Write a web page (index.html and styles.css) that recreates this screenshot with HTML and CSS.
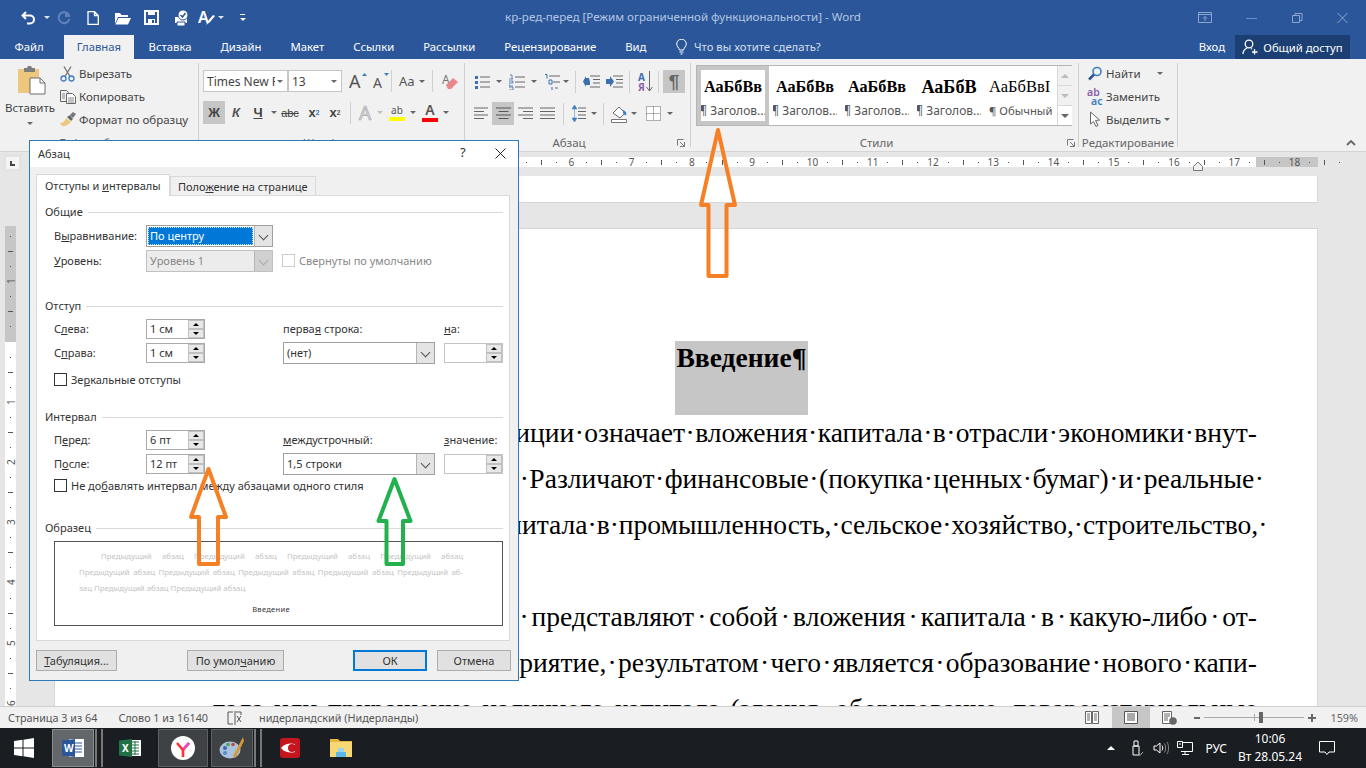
FILE: index.html
```html
<!DOCTYPE html>
<html lang="ru">
<head>
<meta charset="utf-8">
<title>кр-ред-перед - Word</title>
<link rel="stylesheet" href="styles.css">
</head>
<body>
<div class="app">
  <header class="titlebar">
    <div class="qat">
      <svg width="16" height="14" viewBox="0 0 16 14"><path d="M5 1 1.500 4.500 5 8M2 4.500h7a4 4 0 0 1 0 8H6" fill="none" stroke="#fff" stroke-width="2"/></svg>
      <i class="cw"></i>
      <svg class="qr" width="14" height="14" viewBox="0 0 14 14"><path d="M9 1v4h4M12 4A5.500 5.500 0 1 0 12.500 8" fill="none" stroke="#5f82b8" stroke-width="2"/></svg>
      <svg class="qn" width="12" height="14" viewBox="0 0 12 14"><path d="M1 .7h6.500l3.800 3.800v8.800H1zM7.500.7v3.800h3.800" fill="none" stroke="#fff" stroke-width="1.300"/></svg>
      <svg class="qo" width="17" height="14" viewBox="0 0 17 14"><path d="M1 2h5l1.500 2H14v2H4L1 13z" fill="#fff"/><path d="M4.500 7H17l-3 6.500H1.500z" fill="#fff"/></svg>
      <svg class="qs" width="15" height="15" viewBox="0 0 15 15"><path d="M1 1h13v13H1z" fill="none" stroke="#fff" stroke-width="2"/><path d="M4 1h7v4H4zM4 9h7v5H4z" fill="#fff"/><path d="M8 10h2v3H8z" fill="#2b579a"/></svg>
      <svg class="qp" width="18" height="18" viewBox="0 0 18 18"><path d="M3 8h12v6H3z" fill="#fff"/><path d="M5 13h8v4H5z" fill="#fff" stroke="#2b579a"/><circle cx="11" cy="6" r="5" fill="#fff" stroke="#2b579a"/><path d="m8.500 6 2 2 3-4" fill="none" stroke="#2b579a" stroke-width="1.500"/></svg>
      <svg class="qa" width="18" height="18" viewBox="0 0 18 18"><text x="0" y="14" class="qa-t">A</text><path d="m8 16 2-4 5-6 2 1-5 6z" fill="#fff"/></svg>
      <i class="cw qc"></i>
      <span class="qz"><i></i></span>
    </div>
    <div class="doc-title">кр-ред-перед [Режим ограниченной функциональности] - Word</div>
    <div class="winctl">
      <svg width="14" height="12" viewBox="0 0 14 12"><path d="M.5 .5h13v10H.5zM.5 2.500h13M7 9V4.500M5 6.500l2-2 2 2" fill="none" stroke="#8ba6cf"/></svg>
      <svg width="11" height="12" viewBox="0 0 11 12"><path d="M0 6.500h11" stroke="#6d8fc3"/></svg>
      <svg width="11" height="12" viewBox="0 0 11 12"><path d="M.5 3.500h7v7h-7zM3 3V1.500h7v7H8" fill="none" stroke="#8ba6cf"/></svg>
      <svg width="11" height="12" viewBox="0 0 11 12"><path d="m.5 1 10 10m0-10-10 10" stroke="#8ba6cf"/></svg>
    </div>
  </header>

  <nav class="tabs">
    <span class="tab t-file">Файл</span>
    <span class="tab active">Главная</span>
    <span class="tab">Вставка</span>
    <span class="tab">Дизайн</span>
    <span class="tab">Макет</span>
    <span class="tab">Ссылки</span>
    <span class="tab">Рассылки</span>
    <span class="tab">Рецензирование</span>
    <span class="tab">Вид</span>
    <svg class="bulb" width="11" height="16" viewBox="0 0 11 16"><path d="M3.500 11C3 8.500 .7 7.500 .7 5a4.800 4.800 0 0 1 9.600 0c0 2.500-2.300 3.500-2.800 6zM3.500 13h4M4.500 15h2" fill="none" stroke="#fff"/></svg>
    <span class="search">Что вы хотите сделать?</span>
    <span class="login">Вход</span>
    <span class="share">
      <svg width="16" height="16" viewBox="0 0 16 16"><circle cx="7" cy="5" r="3.800" fill="none" stroke="#fff" stroke-width="1.300"/><path d="M1 15c0-3 2-5 4-6M9 9.500l1 .5M12.500 10v5.500M10 13h5.500" fill="none" stroke="#fff" stroke-width="1.300"/></svg>
      Общий доступ
    </span>
  </nav>

  <section class="ribbon">
    <div class="grp g-clip">
      <div class="grp-body clip">
        <div class="paste">
          <svg width="30" height="30" viewBox="0 0 30 30"><path d="M1 4h21v24H1z" fill="#eec77f"/><path d="M7 3h3l1-2h3l1 2h3v4H7z" fill="#7d7d7d"/><path d="M13 13h10l5 5v11H13z" fill="#fff" stroke="#6d6d6d"/><path d="M23 13v5h5" fill="none" stroke="#6d6d6d"/></svg>
          <span class="paste-l">Вставить</span>
          <i class="caret"></i>
        </div>
        <div class="clip-list">
          <div class="cl"><svg width="16" height="16" viewBox="0 0 16 16"><path d="m4 .5 6 10M11 .5l-6 10" stroke="#777" stroke-width="1.400"/><circle cx="3.500" cy="12.500" r="2.500" fill="none" stroke="#3c7fc0" stroke-width="1.300"/><circle cx="11.500" cy="12.500" r="2.500" fill="none" stroke="#3c7fc0" stroke-width="1.300"/></svg>Вырезать</div>
          <div class="cl"><svg width="16" height="14" viewBox="0 0 16 14"><path d="M.5 .5h6l2 2v9h-8z" fill="#f1f1f1" stroke="#666"/><path d="M6.500 3.500h6l3 3v7h-9z" fill="#fff" stroke="#666"/><path d="M2 4h3M2 6h3M2 8h3M8 8h6M8 10h6M8 12h6" stroke="#888"/></svg>Копировать</div>
          <div class="cl"><svg width="16" height="15" viewBox="0 0 16 15"><path d="M0 11c3 0 5-2 6-5l5 4c-2 2-6 5-9 4z" fill="#eec77f"/><path d="m7 5 3-2 3 4-2 2z" fill="#666"/><path d="m10 3 3-3 3 2-3 4z" fill="#777"/></svg>Формат по образцу</div>
        </div>
      </div>
      <div class="grp-label">Буфер обмена</div>
    </div>

    <div class="grp g-font">
      <div class="grp-body">
        <div class="row">
          <span class="fld f-name"><span>Times New R</span><i class="caret fc"></i></span>
          <span class="fld f-size">13<i class="caret fc"></i></span>
          <svg class="m7" width="20" height="18" viewBox="0 0 20 18"><text x="0" y="16" class="ic-a">A</text><path d="m13 4 2.500-3L18 4z" fill="#3c7fc0"/></svg>
          <svg class="m3" width="18" height="18" viewBox="0 0 18 18"><text x="1" y="16" class="ic-a2">A</text><path d="m12 1 2.500 3L17 1z" fill="#3c7fc0"/></svg>
          <i class="sep"></i>
          <span class="aa">Aa</span><i class="caret ca"></i>
          <i class="sep s2"></i>
          <svg class="m9" width="17" height="19" viewBox="0 0 17 19"><text x="0" y="12" class="ic-e">A</text><path d="m4 13 7-7 5 4-7 7H6z" fill="#e9888a"/></svg>
        </div>
        <div class="row r2">
          <span class="btn on bold">Ж</span>
          <span class="btn it">К</span>
          <span class="btn bold und">Ч</span>
          <i class="caret cb"></i>
          <span class="btn strike">abc</span>
          <span class="btn xx">x<sub>2</sub></span>
          <span class="btn xx xs">x<sup>2</sup></span>
          <i class="sep s3"></i>
          <span class="ghost">A</span><i class="caret cg"></i>
          <span class="hl"><span>ab</span><i class="yl"></i></span><i class="caret ch"></i>
          <span class="fc-a"><span>A</span><i class="rd"></i></span><i class="caret cr"></i>
        </div>
      </div>
      <div class="grp-label">Шрифт</div>
    </div>

    <div class="grp g-para">
      <div class="grp-body">
        <div class="row rp">
          <svg class="pl" width="16" height="16" viewBox="0 0 16 16"><path d="M6 3h10M6 8h10M6 13h10" stroke="#666"/><path d="M1 2h3v3H1zM1 7h3v3H1zM1 12h3v3H1z" fill="#3c6fb0"/></svg><i class="caret pc"></i>
          <svg class="pn" width="16" height="16" viewBox="0 0 16 16"><path d="M6 3h10M6 8h10M6 13h10" stroke="#666"/><path d="M1 1h2v4M0 5h4M0 7h4v2H0v3h4M0 13h4v3H0" fill="none" stroke="#3c6fb0" stroke-width=".8"/></svg><i class="caret pc"></i>
          <svg class="pm" width="16" height="16" viewBox="0 0 16 16"><path d="M5 2h11M9 8h7M11 14h3" stroke="#666"/><path d="M1 .5h2v4M5 6h3v4H5zM8 13v3" fill="none" stroke="#3c6fb0"/></svg><i class="caret pd"></i>
          <i class="sep s4"></i>
          <svg class="po" width="17" height="15" viewBox="0 0 17 15"><path d="M7 2h10M10 5.500h7M10 9h7M7 13h10" stroke="#666"/><path d="M6 4H3V2L0 7.500 3 13v-2h4V8z" fill="#3c6fb0"/></svg>
          <svg class="pi" width="17" height="15" viewBox="0 0 17 15"><path d="M7 2h10M10 5.500h7M10 9h7M7 13h10" stroke="#666"/><path d="M0 5h4V2l4 5.500L4 13v-3H0z" fill="#3c6fb0"/></svg>
          <i class="sep s5"></i>
          <span class="sort"><span class="sa">А</span><span class="sb">Я</span></span>
          <svg class="sd" width="7" height="21" viewBox="0 0 7 21"><path d="M3.500 0v20M.5 16l3 4 3-4" fill="none" stroke="#666"/></svg>
          <i class="sep s6"></i>
          <span class="btn on pil">¶</span>
        </div>
        <div class="row r2">
          <svg class="al1" width="15" height="13" viewBox="0 0 15 13"><path d="M0 1h14M0 4.500h10M0 8h14M0 11.500h10" stroke="#666"/></svg>
          <span class="btn on al2"><svg width="15" height="13" viewBox="0 0 15 13"><path d="M0 1h15M2.500 4.500h10M0 8h15M2.500 11.500h10" stroke="#555"/></svg></span>
          <svg class="al3" width="15" height="13" viewBox="0 0 15 13"><path d="M0 1h15M5 4.500h10M0 8h15M5 11.500h10" stroke="#666"/></svg>
          <svg class="al4" width="15" height="13" viewBox="0 0 15 13"><path d="M0 1h15M0 4.500h15M0 8h15M0 11.500h15" stroke="#666"/></svg>
          <i class="sep s7"></i>
          <svg class="ls" width="14" height="17" viewBox="0 0 14 17"><path d="M6 3h8M6 6.500h8M6 10h8M6 13.500h8" stroke="#666"/><path d="M2.500 2v13M0 4l2.500-4L5 4zM0 13l2.500 4L5 13z" fill="#3c7fc0" stroke="#3c7fc0" stroke-width=".5"/></svg><i class="caret pe"></i>
          <i class="sep s8"></i>
          <svg class="fl" width="17" height="18" viewBox="0 0 17 18"><path d="m2 8 6-6 6 6-5 5z" fill="#fff" stroke="#666"/><path d="M12 5c3 1 4 4 3 5s-2-1-3-2z" fill="#3c7fc0"/><path d="M.5 14.500h15v3H.5z" fill="#fff" stroke="#777"/></svg><i class="caret pf"></i>
          <svg class="bd" width="15" height="15" viewBox="0 0 15 15"><path d="M.5 .5h14v14H.5zM7.500 .5v14M.5 7.500h14" fill="#fff" stroke="#666" stroke-dasharray="1 1"/></svg><i class="caret pg"></i>
        </div>
      </div>
      <div class="grp-label">Абзац<svg class="launch" width="8" height="8" viewBox="0 0 8 8"><path d="M.5 .5h6M.5 .5v6M7.500 3v4.500H3M3 3l4 4" fill="none" stroke="#777"/></svg></div>
    </div>

    <div class="grp g-styles">
      <div class="grp-body">
        <div class="gallery">
          <div class="style sel"><b>АаБбВв</b><small>¶ Заголов...</small></div>
          <div class="style"><b>АаБбВв</b><small>¶ Заголов...</small></div>
          <div class="style"><b>АаБбВв</b><small>¶ Заголов...</small></div>
          <div class="style"><b class="big">АаБбВ</b><small>¶ Заголов...</small></div>
          <div class="style plain"><b>АаБбВвI</b><small>¶ Обычный</small></div>
          <div class="scroll">
            <span><i class="up"></i></span>
            <span><i class="dn"></i></span>
            <span class="more"><i class="dn2"></i></span>
          </div>
        </div>
      </div>
      <div class="grp-label">Стили<svg class="launch l2" width="8" height="8" viewBox="0 0 8 8"><path d="M.5 .5h6M.5 .5v6M7.500 3v4.500H3M3 3l4 4" fill="none" stroke="#777"/></svg></div>
    </div>

    <div class="grp g-edit">
      <div class="grp-body edit">
        <div class="ed"><svg width="15" height="15" viewBox="0 0 15 15"><circle cx="9.500" cy="5.500" r="4" fill="none" stroke="#3c7fc0" stroke-width="1.600"/><path d="m6.500 8.500-5 5" stroke="#2b579a" stroke-width="2.500"/></svg>Найти<i class="caret ce"></i></div>
        <div class="ed"><span class="abac"><span>ab</span><span>ac</span></span>Заменить</div>
        <div class="ed"><svg width="15" height="17" viewBox="0 0 15 17"><path d="M3 1v12l3-2.500 2.500 5 2-1-2.500-5 4-.5z" fill="#fff" stroke="#666"/></svg>Выделить<i class="caret cf"></i></div>
      </div>
      <div class="grp-label">Редактирование</div>
    </div>
    <svg class="collapse" width="10" height="6" viewBox="0 0 10 6"><path d="m1 5 4-4 4 4" fill="none" stroke="#666" stroke-width="1.800"/></svg>
  </section>

  <main class="work">
    <div class="hrow">
      <span class="corner"><i></i></span>
      <div class="hruler">
        <b class="cm"><span>1</span><i class="d"></i><i class="t"></i><i class="d"></i></b>
        <b class="cm"><span>2</span><i class="d"></i><i class="t"></i><i class="d"></i></b>
        <b class="cm"><span>3</span><i class="d"></i><i class="t"></i><i class="d"></i></b>
        <b class="cm"><span>4</span><i class="d"></i><i class="t"></i><i class="d"></i></b>
        <b class="cm"><span>5</span><i class="d"></i><i class="t"></i><i class="d"></i></b>
        <b class="cm"><span>6</span><i class="d"></i><i class="t"></i><i class="d"></i></b>
        <b class="cm"><span>7</span><i class="d"></i><i class="t"></i><i class="d"></i></b>
        <b class="cm"><span>8</span><i class="d"></i><i class="t"></i><i class="d"></i></b>
        <b class="cm"><span>9</span><i class="d"></i><i class="t"></i><i class="d"></i></b>
        <b class="cm"><span>10</span><i class="d"></i><i class="t"></i><i class="d"></i></b>
        <b class="cm"><span>11</span><i class="d"></i><i class="t"></i><i class="d"></i></b>
        <b class="cm"><span>12</span><i class="d"></i><i class="t"></i><i class="d"></i></b>
        <b class="cm"><span>13</span><i class="d"></i><i class="t"></i><i class="d"></i></b>
        <b class="cm"><span>14</span><i class="d"></i><i class="t"></i><i class="d"></i></b>
        <b class="cm"><span>15</span><i class="d"></i><i class="t"></i><i class="d"></i></b>
        <b class="cm"><span>16</span><i class="d"></i><i class="t"></i><i class="d"></i></b>
        <b class="cm"><span>17</span><i class="d"></i><i class="t"></i><i class="d"></i></b>
        <b class="cm"><span>18</span><i class="d"></i><i class="t"></i><i class="d"></i></b>
        <svg class="indent" width="10" height="10" viewBox="0 0 10 10"><path d="M.5 9.500v-4L5 1l4.500 4.500v4z" fill="#f1f1f1" stroke="#777"/></svg>
      </div>
    </div>
    <div class="docrow">
      <div class="vside">
        <div class="vruler">
          <b class="vm"><i class="d"></i><i class="t"></i><i class="d"></i><span>1</span></b>
          <b class="vm"><i class="d"></i><i class="t"></i><i class="d"></i><span></span></b>
          <b class="vm"><i class="d"></i><i class="t"></i><i class="d"></i><span>1</span></b>
          <b class="vm"><i class="d"></i><i class="t"></i><i class="d"></i><span>2</span></b>
          <b class="vm"><i class="d"></i><i class="t"></i><i class="d"></i><span>3</span></b>
          <b class="vm"><i class="d"></i><i class="t"></i><i class="d"></i><span>4</span></b>
          <b class="vm"><i class="d"></i><i class="t"></i><i class="d"></i><span>5</span></b>
          <b class="vm"><i class="d"></i><i class="t"></i><i class="d"></i><span>6</span></b>
        </div>
      </div>
      <div class="pages">
        <div class="page-prev"></div>
        <article class="page">
          <h1 class="heading"><span>Введение¶</span></h1>
          <p class="ln first">Понятие · слова · инвестиции · означает · вложения · капитала · в · отрасли · экономики · внут-</p>
          <p class="ln hang">ри · страны · и · за · границей. · Различают · финансовые · (покупка · ценных · бумаг) · и · реальные ·</p>
          <p class="ln hang">инвестиции · вложения · капитала · в · промышленность, · сельское · хозяйство, · строительство, ·</p>
          <p class="ln short">транспорт · и · торговлю.¶</p>
          <p class="ln first">Реальные · инвестиции · представляют · собой · вложения · капитала · в · какую-либо · от-</p>
          <p class="ln">расль · страны · и · на · предприятие, · результатом · чего · является · образование · нового · капи-</p>
          <p class="ln">тала · или · приращение · наличного · капитала · (здания, · оборудование, · товароматериальные</p>
        </article>
      </div>
    </div>
  </main>

  <footer class="status">
    <span class="st-a">Страница 3 из 64</span>
    <span class="st-b">Слово 1 из 16140</span>
    <svg class="st-i" width="15" height="14" viewBox="0 0 15 14"><path d="M6 1H1v12h5M9 1h5v3M8 0v14M10 5l4 6m0-6-4 6" fill="none" stroke="#555"/></svg>
    <span class="st-c">нидерландский (Нидерланды)</span>
    <span class="st-r">
      <svg class="v1" width="14" height="13" viewBox="0 0 14 13"><path d="M.5 .5h6v12h-6zM7.500 .5h6v12h-6zM2 3h3M2 5h3M2 7h3M2 9h3M9 3h3M9 5h3M9 7h3M9 9h3" fill="#fff" stroke="#666"/></svg>
      <span class="v2"><svg width="14" height="13" viewBox="0 0 14 13"><path d="M.5 .5h13v12H.5zM3 3h8M3 5h8M3 7h8M3 9h8" fill="#fff" stroke="#555"/></svg></span>
      <svg class="v3" width="15" height="14" viewBox="0 0 15 14"><path d="M.5 .5h9v12h-9zM2 3h6M2 5h6M2 7h4M2 9h4" fill="#fff" stroke="#666"/><circle cx="11" cy="10" r="3.800" fill="#666"/></svg>
      <i class="zm-minus"></i>
      <span class="slider"><i class="zt"></i><i class="zh"></i></span>
      <span class="zm-plus"></span>
      <span class="zm-val">159%</span>
    </span>
  </footer>

  <div class="taskbar">
    <svg class="win" width="20" height="20" viewBox="0 0 20 20"><path d="M0 3 8.500 1.800v7.700H0zM9.500 1.700 20 0v9.500H9.500zM0 10.500h8.500v7.700L0 17zM9.500 10.500H20V20L9.500 18.300z" fill="#fff"/></svg>
    <span class="tb tb-word">
      <svg width="22" height="20" viewBox="0 0 22 20"><path d="M7 1h15v18H7z" fill="#fff"/><path d="M10 5h10M10 8h10M10 11h10M10 14h10" stroke="#2b579a"/><path d="M0 2.500 13 1v18L0 17.500z" fill="#2b579a"/><text x="2" y="14" class="tw">W</text></svg>
    </span>
    <i class="tb-edge"></i>
    <span class="tb tb-x">
      <svg width="22" height="20" viewBox="0 0 22 20"><path d="M8 2h14v16H8z" fill="#fff"/><path d="M13 4h7M13 7h7M13 10h7M13 13h7M13 16h7M16 3v14" stroke="#217346"/><path d="M0 2.500 13 1v18L0 17.500z" fill="#217346"/><text x="3" y="14" class="tw">X</text></svg>
    </span>
    <span class="tb tb-y">
      <svg width="24" height="24" viewBox="0 0 24 24"><circle cx="12" cy="12" r="12" fill="#fff"/><path d="m6 7 6 7 6-7" fill="none" stroke="#f33" stroke-width="2.600"/><path d="M12 14v7" stroke="#f33" stroke-width="2.600"/><path d="m12.500 13 5.500-6" stroke="#e94cc0" stroke-width="2.600"/></svg>
    </span>
    <span class="tb tb-p">
      <svg width="26" height="24" viewBox="0 0 26 24"><ellipse cx="11" cy="14" rx="10.500" ry="8.500" fill="#a9c3dc"/><circle cx="6" cy="12" r="2" fill="#46a"/><circle cx="9" cy="8.500" r="1.800" fill="#4a5"/><circle cx="14" cy="8.500" r="1.800" fill="#c44"/><circle cx="6" cy="17" r="2" fill="#58c"/><path d="M24 1 14 20l2.500 2L25 5z" fill="#d8963a"/></svg>
      </span>
    <i class="tb-edge e2"></i>
    <svg class="tb-a" width="20" height="20" viewBox="0 0 20 20"><rect width="20" height="20" rx="3" fill="#c4161c"/><path d="M1 10c4-5 10-5 14-4v8c-4 1-10 1-14-4z" fill="#fff"/><circle cx="12" cy="10" r="4" fill="#c4161c"/></svg>
    <svg class="tb-f" width="22" height="20" viewBox="0 0 22 20"><path d="M0 1h8l2 2h12v5H0z" fill="#e6b93e"/><path d="M0 4h22v15H0z" fill="#f8d775"/><path d="M6 14h10v5H6z" fill="#5db7e8"/><path d="M8 10h6v4H8z" fill="#9dd4f2"/></svg>
    <div class="tray">
      <i class="tr-up"></i>
      <svg class="tr1" width="12" height="16" viewBox="0 0 12 16"><path d="M2 6h6v9H2zM3 1h4v5H3z" fill="none" stroke="#fff"/><path d="m7 14 2 1.500L12 12" fill="none" stroke="#aaa"/></svg>
      <svg class="tr2" width="16" height="14" viewBox="0 0 16 14"><path d="M1 5h2.500L7 2v10L3.500 9H1z" fill="none" stroke="#fff"/><path d="M9 4.500c1 1.500 1 3.500 0 5" fill="none" stroke="#fff"/><path d="M11.500 2.500c1.500 2.500 1.500 6.500 0 9M14 1c2 3 2 9 0 12" fill="none" stroke="#888"/></svg>
      <svg class="tr3" width="16" height="14" viewBox="0 0 16 14"><path d="M4 1.500h11.500v9H4M8 10.500v3M5 13.500h7" fill="none" stroke="#fff"/><path d="M.5 .5h5v6h-5z" fill="#1b1e22" stroke="#fff"/><path d="M2 3h2" stroke="#fff"/></svg>
      <span class="tr-lang">РУС</span>
      <span class="clock"><span>10:06</span><span>Вт 28.05.24</span></span>
      <svg class="tr-n" width="16" height="14" viewBox="0 0 16 14"><path d="M.5 .5h15v10.500H10L8 13.500 6 11H.5z" fill="none" stroke="#fff"/></svg>
    </div>
  </div>

  <aside class="dialog">
    <div class="dlg-title"><span>Абзац</span><span class="dlg-q">?</span>
      <svg class="dlg-x" width="11" height="11" viewBox="0 0 11 11"><path d="m.5 .5 10 10m0-10-10 10" stroke="#222"/></svg>
    </div>
    <div class="dlg-body">
      <div class="dtabs">
        <span class="dtab on">Отступы и <u>и</u>нтервалы</span>
        <span class="dtab">Поло<u>ж</u>ение на странице</span>
      </div>
      <div class="panel">
        <div class="legend l-a"><span>Общие</span></div>
        <div class="gen">
          <label class="lb">В<u>ы</u>равнивание:</label>
          <span class="combo focus"><span class="val"><em>По центру</em></span><i class="cbt"></i></span>
          <span></span>
          <label class="lb"><u>У</u>ровень:</label>
          <span class="combo off"><span class="val">Уровень 1</span><i class="cbt"></i></span>
          <span class="chk disabled"><i></i><span>Свернуты по умолчанию</span></span>
        </div>
        <div class="legend l-b"><span>Отступ</span></div>
        <div class="fields">
          <label class="lb">С<u>л</u>ева:</label>
          <span class="spin"><span>1 см</span><b class="ar"><i></i><i></i></b></span>
          <span class="ff"></span>
          <label class="lb">перва<u>я</u> строка:</label>
          <span></span>
          <label class="lb"><u>н</u>а:</label>
          <label class="lb">С<u>п</u>рава:</label>
          <span class="spin"><span>1 см</span><b class="ar"><i></i><i></i></b></span>
          <span class="ff"></span>
          <span class="combo"><span class="val">(нет)</span><i class="cbt"></i></span>
          <span></span>
          <span class="spin light"><span></span><b class="ar"><i></i><i></i></b></span>
        </div>
        <span class="chk c-a"><i></i><span>Зе<u>р</u>кальные отступы</span></span>
        <div class="legend l-c"><span>Интервал</span></div>
        <div class="fields">
          <label class="lb">П<u>е</u>ред:</label>
          <span class="spin"><span>6 пт</span><b class="ar"><i></i><i></i></b></span>
          <span class="ff"></span>
          <label class="lb"><u>м</u>еждустрочный:</label>
          <span></span>
          <label class="lb"><u>з</u>начение:</label>
          <label class="lb">П<u>о</u>сле:</label>
          <span class="spin"><span>12 пт</span><b class="ar"><i></i><i></i></b></span>
          <span class="ff"></span>
          <span class="combo"><span class="val">1,5 строки</span><i class="cbt"></i></span>
          <span></span>
          <span class="spin light"><span></span><b class="ar"><i></i><i></i></b></span>
        </div>
        <span class="chk c-b"><i></i><span>Не до<u>б</u>авлять интервал между абзацами одного стиля</span></span>
        <div class="legend l-d"><span>Образец</span></div>
        <div class="sample">
          <p class="sp first">Предыдущий абзац Предыдущий абзац Предыдущий абзац Предыдущий абзац</p>
          <p class="sp">Предыдущий абзац Предыдущий абзац Предыдущий абзац Предыдущий абзац Предыдущий аб-</p>
          <p class="sp left">зац Предыдущий абзац Предыдущий абзац</p>
          <p class="sp-cur">Введение</p>
        </div>
      </div>
      <div class="dbtns">
        <span class="dbtn b1"><u>Т</u>абуляция...</span>
        <span class="dbtn b2">По умол<u>ч</u>анию</span>
        <span class="dbtn b3">ОК</span>
        <span class="dbtn b4">Отмена</span>
      </div>
    </div>
  </aside>

  <svg class="arrows" width="1366" height="768" viewBox="0 0 1366 768">
    <path d="M718 130 735 205H726.500V276H708.500V205H701z" fill="none" stroke="#f58025" stroke-width="4" stroke-linejoin="round"/>
    <path d="M208.500 469 226 517H218V564H199V517H191z" fill="none" stroke="#f58025" stroke-width="4" stroke-linejoin="round"/>
    <path d="M394.500 479 410.500 521H403V564H386.500V521H378.500z" fill="none" stroke="#22b14c" stroke-width="4" stroke-linejoin="round"/>
  </svg>
</div>
</body>
</html>
```
FILE: styles.css
```css
* { box-sizing: border-box; }
html, body { margin: 0; height: 100%; }
body { font-family: "Noto Sans", "Open Sans", sans-serif; font-size: 11.5px; color: #444; overflow: hidden; }
i, b, em { font-style: normal; font-weight: normal; }
.app { position: relative; width: 1366px; height: 768px; display: flex; flex-direction: column; overflow: hidden; background: #e6e6e6; }

/* title bar */
.titlebar { height: 35px; background: #2b579a; display: flex; align-items: center; position: relative; flex: none; }
.qat { display: flex; align-items: center; padding-left: 21px; width: 480px; height: 100%; }
.cw { width: 0; height: 0; border: 3px solid transparent; border-top: 3px solid #dfe7f3; border-bottom: 0; margin-left: 7px; }
.qr { margin-left: 7px; }
.qn { margin-left: 16px; }
.qo { margin-left: 15px; }
.qs { margin-left: 13px; }
.qp { margin-left: 13px; }
.qa { margin-left: 8px; }
.qa-t { font: 600 16px "Noto Sans", sans-serif; fill: #fff; }
.qc { margin-left: 2px; }
.qz { margin-left: 16px; width: 5px; height: 7px; border-top: 1px solid #fff; display: flex; align-items: flex-end; }
.qz i { border: 3px solid transparent; border-top: 3px solid #fff; border-bottom: 0; margin-left: -.5px; }
.doc-title { position: absolute; left: 505px; top: 9px; font-size: 11.550px; color: #b4c6e2; white-space: nowrap; }
.winctl { margin-left: auto; display: flex; align-items: center; padding-right: 18px; gap: 34.500px; }

/* tabs */
.tabs { height: 24px; background: #2b579a; display: flex; flex: none; align-items: stretch; color: #fff; font-size: 11.300px; line-height: 23px; }
.tab { padding: 0 14.500px; white-space: nowrap; }
.t-file { padding-right: 20px; }
.tab.active { background: #f1f1f1; color: #2b579a; padding: 0 13px; }
.bulb { margin: 4px 0 0 15px; }
.search { margin-left: 7px; color: #d5dfee; }
.login { margin-left: auto; }
.share { margin: 0 16px 0 10px; width: 115px; background: #1c3f73; display: flex; align-items: center; justify-content: center; gap: 5px; }

/* ribbon */
.ribbon { height: 93px; background: #f1f1f1; border-bottom: 1px solid #d4d4d4; display: flex; flex: none; position: relative; }
.grp { display: flex; flex-direction: column; border-right: 1px solid #d0d0d0; margin: 4px 0 0; height: 84px; }
.grp-body { flex: 1; min-height: 0; }
.grp-label { height: 17px; text-align: center; color: #666; line-height: 25px; position: relative; white-space: nowrap; }
.launch { position: absolute; right: 5px; top: 9px; }
.launch.l2 { right: 3px; }
.g-clip { width: 199px; }
.g-font { width: 266px; padding-left: 4px; }
.g-font .grp-label { padding-right: 22px; }
.g-para { width: 226px; padding: 0 0 0 9px; }
.g-para .grp-label { padding-right: 26px; }
.g-styles { width: 388px; padding-left: 5px; }
.g-styles .grp-label { padding-right: 21px; }
.g-edit { width: 99px; }
.collapse { position: absolute; right: 10px; top: 81px; }
.caret { display: block; flex: none; width: 0; height: 0; border: 3px solid transparent; border-top: 3px solid #666; border-bottom: 0; }

.clip { display: flex; }
.paste { width: 60px; display: flex; flex-direction: column; align-items: center; padding-top: 2px; }
.paste svg { margin-left: 4px; flex: none; }
.paste-l { margin-top: 5px; line-height: 16px; }
.paste .caret { margin-top: 6px; }
.clip-list { display: flex; flex-direction: column; margin-top: -1px; }
.cl { height: 23px; flex: none; display: flex; align-items: center; gap: 3px; white-space: nowrap; }

.row { display: flex; align-items: center; height: 22px; margin-top: 7px; }
.r2 { height: 23px; margin-top: 9px; }
.fld { height: 22px; background: #fff; border: 1px solid #c6c6c6; display: flex; align-items: center; padding-left: 3px; position: relative; font-size: 12px; color: #444; white-space: nowrap; }
.f-name { width: 85px; }
.f-name span { display: block; width: 68px; overflow: hidden; }
.f-size { width: 54px; }
.fc { position: absolute; right: 4px; top: 9px; }
.m7 { margin-left: 7px; }
.m3 { margin-left: 3px; }
.m9 { margin-left: 9px; }
.ic-a { font: 18px "Noto Sans", sans-serif; fill: #555; }
.ic-a2 { font: 14px "Noto Sans", sans-serif; fill: #555; }
.ic-e { font: 12px "Noto Sans", sans-serif; fill: #777; }
.tw { font: 700 10px "Noto Sans", sans-serif; fill: #fff; }
.sep { display: block; flex: none; width: 1px; height: 22px; background: #d0d0d0; margin-left: 1px; }
.aa { margin-left: 7px; font-size: 13px; color: #555; }
.ca { margin-left: 4px; }
.s2 { margin-left: 7px; }
.btn { flex: none; width: 22px; height: 23px; display: flex; align-items: center; justify-content: center; color: #444; font-size: 13px; }
.on { background: #c6c6c6; }
.bold { font-weight: 700; font-family: "Liberation Sans", sans-serif; }
.it { font-family: "Liberation Sans", sans-serif; font-style: italic; font-weight: 700; color: #555; }
.und { text-decoration: underline; }
.cb { margin-left: 2px; }
.strike { margin-left: 2px; text-decoration: line-through; font-size: 11px; font-family: "Liberation Sans", sans-serif; }
.xx { font-weight: 700; font-family: "Liberation Sans", sans-serif; margin-left: 2px; width: 22px; }
.xs { margin-left: 0; width: 20px; }
.xx sub, .xx sup { font-size: 6.500px; color: #3c6fb0; }
.xx sup { color: #555; }
.s3 { margin-left: 5px; }
.ghost { margin-left: 8px; width: 17px; font-size: 19px; line-height: 20px; color: #d8d8d8; -webkit-text-stroke: .7px #aaa; }
.cg { margin-left: 1px; border-top-color: #c0c0c0; }
.hl { margin-left: 6px; width: 16px; display: flex; flex-direction: column; align-items: center; font-size: 10px; line-height: 13px; color: #555; }
.yl { display: block; width: 16px; height: 4px; background: #ff0; }
.ch { margin-left: 5px; }
.fc-a { margin-left: 6px; width: 16px; display: flex; flex-direction: column; align-items: center; font-size: 14px; line-height: 14px; font-weight: 600; color: #555; }
.rd { display: block; width: 16px; height: 3.500px; background: #f00; margin-top: 1px; }
.cr { margin-left: 5px; }

.rp { height: 23px; margin-top: 7px; }
.pc { margin-left: 6px; }
.pn { margin-left: 7px; }
.pm { margin-left: 7px; }
.pd { margin-left: 3px; }
.s4 { margin-left: 6px; }
.po { margin-left: 7px; }
.pi { margin-left: 6px; }
.s5 { margin-left: 6px; }
.sort { margin-left: 8px; display: flex; flex-direction: column; font-size: 10px; line-height: 10px; font-weight: 700; }
.sa { color: #3c6fb0; }
.sb { color: #8a5fa8; }
.sd { margin-left: 1px; }
.s6 { margin-left: 5px; }
.pil { margin-left: 4px; font-size: 19px; font-weight: 700; font-family: "Liberation Sans", sans-serif; color: #666; }
.al2 { margin-left: 3px; }
.al3 { margin-left: 4px; }
.al4 { margin-left: 7px; }
.s7 { margin-left: 8px; }
.ls { margin-left: 8px; }
.pe { margin-left: 5px; }
.s8 { margin-left: 6px; }
.fl { margin-left: 7px; }
.pf { margin-left: 3px; }
.bd { margin-left: 9px; }
.pg { margin-left: 6px; }

.gallery { height: 61px; margin-top: 2px; width: 376px; background: #fff; border: 1px solid #b5b5b5; display: flex; }
.style { width: 72px; flex: none; display: flex; flex-direction: column; align-items: center; color: #000; border: 4px solid transparent; overflow: hidden; white-space: nowrap; }
.style b { font-family: "Liberation Serif", serif; font-size: 16.200px; font-weight: 700; line-height: 34px; height: 33px; }
.style b.big { font-size: 18.200px; }
.style.plain { align-items: flex-start; }
.style.plain b { font-weight: 400; font-size: 16.500px; }
.style small { font-size: 12px; line-height: 15px; color: #555; }
.style.plain small { font-size: 11.300px; }
.style.sel { border-color: #c6c6c6; }
.scroll { margin-left: auto; width: 15px; display: flex; flex-direction: column; border-left: 1px solid #d8d8d8; flex: none; }
.scroll span { flex: 1; background: #f1f1f1; border-bottom: 1px solid #d8d8d8; display: flex; align-items: center; justify-content: center; }
.scroll .more { background: #fff; border-bottom: 0; }
.up { border: 4px solid transparent; border-bottom: 4px solid #bbb; border-top: 0; }
.dn { border: 4px solid transparent; border-top: 4px solid #bbb; border-bottom: 0; }
.dn2 { border: 4px solid transparent; border-top: 4px solid #666; border-bottom: 0; box-shadow: 0 -3px 0 -2px #666; }

.edit { display: flex; flex-direction: column; padding: 0 0 0 8px; margin-top: -1px; }
.ed { height: 23px; flex: none; display: flex; align-items: center; gap: 3px; white-space: nowrap; position: relative; }
.ed > svg, .abac { width: 16px; flex: none; }
.abac { display: flex; flex-direction: column; font-size: 10.500px; line-height: 8.500px; font-weight: 600; color: #8a5fa8; }
.abac span:last-child { color: #3c7fc0; margin-left: 4px; }
.ce { margin-left: 13px; }
.cf { margin-left: 0; }

/* work area */
.work { flex: 1; min-height: 0; display: flex; flex-direction: column; background: #e6e6e6; position: relative; }
.hrow { height: 24px; flex: none; display: flex; }
.corner { width: 19px; height: 18px; background: #f4f4f4; margin: 2px 0 0 3px; display: flex; align-items: center; justify-content: center; border: 3px solid #e3e3e3; }
.corner i { width: 5px; height: 5px; border-left: 2px solid #444; border-bottom: 2px solid #444; }
.hruler { margin: 5px 0 0 32px; width: 1264px; height: 10px; background: linear-gradient(90deg, #c6c6c6 159px, #fff 159px, #fff 1202px, #c6c6c6 1202px); display: flex; padding-left: 208.500px; position: relative; }
.cm { width: 60.280px; flex: none; display: flex; align-items: center; font-size: 10px; color: #555; }
.cm > * { flex: 1; display: flex; justify-content: center; align-items: center; white-space: nowrap; }
.d::after { content: ""; display: block; width: 1px; height: 1px; background: #555; }
.t::after { content: ""; display: block; width: 1px; height: 5px; background: #555; }
.indent { position: absolute; left: 1139px; top: 4px; }
.docrow { flex: 1; min-height: 0; display: flex; overflow: hidden; }
.vside { width: 54px; flex: none; }
.vruler { margin: 50px 0 0 5px; width: 11px; height: 490px; background: linear-gradient(#c6c6c6 116px, #fff 116px); padding-top: 3px; display: flex; flex-direction: column; overflow: hidden; }
.vm { height: 60.250px; flex: none; display: flex; flex-direction: column; align-items: stretch; font-size: 10px; color: #555; }
.vm > * { flex: 1; display: flex; align-items: center; justify-content: center; }
.vm span { writing-mode: vertical-rl; transform: rotate(180deg); }
.vm .t::after { width: 5px; height: 1px; }
.pages { width: 1264px; flex: none; display: flex; flex-direction: column; }
.page-prev { height: 27px; background: #fff; border: 1px solid #d6d6d6; border-top: 0; flex: none; }
.page { margin-top: 25px; flex: 1; background: #fff; border: 1px solid #d6d6d6; border-bottom: 0; padding: 112px 60px 0 158px; font-family: "Liberation Serif", serif; font-size: 27.560px; color: #000; min-height: 0; overflow: hidden; }
.heading { margin: 0 0 -5px; padding-left: 13px; font-size: 27.560px; text-align: center; font-weight: 700; line-height: 34px; }
.heading span { display: inline-block; height: 74px; background: #c6c6c6; padding: 0 1px; }
.ln { margin: 0; line-height: 46px; height: 46px; text-align: justify; text-align-last: justify; white-space: nowrap; word-spacing: -.25em; }
.ln.first { margin-left: 38px; }
.ln.short { text-align-last: left; }
.ln.hang { margin-right: -7px; }

/* status */
.status { height: 22px; flex: none; background: #f1f1f1; border-top: 1px solid #cfcfcf; display: flex; align-items: center; color: #555; font-size: 10.800px; position: relative; }
.st-a { margin-left: 8px; }
.st-b { margin-left: 21px; }
.st-i { margin-left: 19px; }
.st-c { margin-left: 17px; }
.st-r { margin-left: auto; display: flex; align-items: center; height: 100%; }
.v2 { width: 38px; height: 100%; background: #c6c6c6; display: flex; align-items: center; justify-content: center; margin-left: 13px; }
.v3 { margin-left: 12px; }
.zm-minus { width: 6px; height: 2px; background: #666; margin-left: 17px; }
.slider { width: 100px; height: 1px; background: #aaa; margin-left: 4px; position: relative; }
.zt { position: absolute; left: 50px; top: -3px; width: 1px; height: 7px; background: #aaa; }
.zh { position: absolute; left: 55px; top: -5px; width: 4px; height: 11px; background: #666; }
.zm-plus { width: 8px; height: 8px; margin-left: 4px; background: linear-gradient(#666,#666) center/8px 2px no-repeat, linear-gradient(#666,#666) center/2px 8px no-repeat; }
.zm-val { margin: 0 8px 0 15px; color: #666; }

/* taskbar */
.taskbar { height: 40px; flex: none; background: #1a1d21; display: flex; align-items: center; position: relative; }
.win { margin-left: 14px; }
.tb { height: 38px; display: flex; align-items: center; justify-content: center; flex: none; }
.tb-word { width: 42px; margin-left: 18px; background: #64676a; border: 1px solid #8a8c8e; }
.tb-edge { width: 8px; height: 38px; margin-left: 1px; flex: none; border-left: 2px solid #777; border-right: 2px solid #777; }
.tb-x { width: 42px; margin-left: 6px; }
.tb-y { width: 50px; margin-left: 7px; background: #3f4245; border: 1px solid #5e6062; }
.tb-p { width: 42px; margin-left: 3px; background: #3f4245; border: 1px solid #5e6062; }
.e2 { margin-left: 1px; }
.tb-a { margin-left: 18px; }
.tb-f { margin-left: 30px; }
.tray { margin-left: auto; display: flex; align-items: center; color: #fff; height: 100%; }
.tr-up { width: 0; height: 0; border: 4px solid transparent; border-bottom: 4px solid #fff; border-top: 0; }
.tr1 { margin-left: 16px; }
.tr2 { margin-left: 10px; }
.tr3 { margin-left: 8px; }
.tr-lang { margin-left: 12px; font-size: 12px; }
.clock { width: 86px; display: flex; flex-direction: column; align-items: center; font-size: 12px; line-height: 18px; }
.tr-n { margin: 0 31px 0 6px; }

/* dialog */
.dialog { position: absolute; left: 29px; top: 140px; width: 490px; height: 541px; background: #f0f0f0; border: 1px solid #2b7ab9; display: flex; flex-direction: column; color: #333; font-size: 11px; }
.dlg-title { height: 26px; background: #fff; display: flex; align-items: center; padding: 0 0 2px 8px; flex: none; position: relative; color: #333; }
.dlg-q { position: absolute; left: 430px; top: 2px; font-size: 13px; }
.dlg-x { position: absolute; left: 465px; top: 7px; }
.dlg-body { flex: 1; display: flex; flex-direction: column; padding: 7px 0 0 6px; background: #f0f0f0; }
.dtabs { display: flex; height: 21px; align-items: flex-end; position: relative; z-index: 1; flex: none; }
.dtab { height: 19px; padding: 0 7px; background: #f0f0f0; border: 1px solid #d9d9d9; border-bottom: 0; line-height: 19px; width: 146px; white-space: nowrap; }
.dtab.on { height: 22px; width: 134px; background: #fff; padding: 0 8px; line-height: 22px; margin-bottom: -1px; }
.panel { width: 474px; height: 446px; background: #fff; border: 1px solid #d9d9d9; padding: 8px 6px 0 8px; display: flex; flex-direction: column; flex: none; }
.legend { height: 16px; line-height: 16px; display: flex; align-items: center; gap: 5px; flex: none; }
.legend::after { content: ""; flex: 1; height: 1px; background: #d9d9d9; }
.lb { white-space: nowrap; }
.fields .lb { padding-bottom: 2px; }
.gen { margin: 3px 0 0 9px; display: grid; grid-template-columns: 92px 127px 1fr; grid-auto-rows: 25px; align-items: center; }
.gen .chk { margin-left: 9px; }
.l-b { margin-top: 25px; }
.fields { margin: 3px 0 0 9px; display: grid; grid-template-columns: 92px 59px 78px 152px 9px 59px; grid-auto-rows: 24px; align-items: center; }
.combo { height: 22px; border: 1px solid #a0a0a0; background: #fff; display: flex; align-items: stretch; }
.combo .val { flex: 1; padding-left: 3px; line-height: 20px; white-space: nowrap; }
.cbt { width: 18px; flex: none; background: #e4e4e4; border-left: 1px solid #b5b5b5; position: relative; }
.cbt::after { content: ""; position: absolute; left: 5px; top: 6px; width: 6px; height: 6px; border-right: 1px solid #555; border-bottom: 1px solid #555; transform: rotate(45deg); }
.focus .val { padding: 1px; }
.focus em { display: block; height: 18px; line-height: 16px; background: #0078d7; color: #fff; padding-left: 1px; border: 1px dotted #c8e0f4; }
.off { background: #ececec; border-color: #c0c0c0; color: #888; }
.off .cbt { background: #d0d0d0; }
.off .cbt::after { border-color: #aaa; }
.spin { height: 20px; border: 1px solid #a9a9a9; background: #fff; display: flex; align-items: stretch; }
.spin > span { flex: 1; padding-left: 3px; line-height: 18px; white-space: nowrap; }
.spin.light { border-color: #c4c4c4; }
.ar { width: 16px; flex: none; display: flex; flex-direction: column; }
.ar i { flex: 1; background: #e8e8e8; border: 1px solid #c0c0c0; display: flex; align-items: center; justify-content: center; }
.ar i::after { content: ""; border: 3px solid transparent; }
.ar i:first-child::after { border-bottom: 3px solid #000; border-top: 0; }
.ar i:last-child::after { border-top: 3px solid #000; border-bottom: 0; }
.chk { display: flex; align-items: center; gap: 4px; white-space: nowrap; }
.chk i { width: 13px; height: 13px; background: #fff; border: 1px solid #333; flex: none; }
.chk.disabled { color: #888; }
.chk.disabled i { border-color: #ccc; }
.c-a { margin: 6px 0 0 9px; height: 16px; flex: none; }
.l-c { margin-top: 22px; }
.c-b { margin: 1px 0 0 9px; height: 16px; flex: none; }
.l-d { margin-top: 27px; }
.sample { margin: 5px 0 0 9px; width: 449px; height: 85px; border: 1px solid #555; padding: 6px 39px 0 24px; background: #fff; font-size: 7.800px; color: #c4c4c4; flex: none; }
.sp { margin: 0; height: 16px; line-height: 16px; text-align: justify; text-align-last: justify; white-space: nowrap; }
.sp.first { margin-left: 22px; }
.sp.left { text-align-last: left; }
.sp-cur { margin: 5px 0 0; text-align: center; color: #333; font-size: 7.500px; line-height: 16px; letter-spacing: .3px; }
.dbtns { display: flex; margin-top: 9px; }
.dbtn { height: 21px; line-height: 19px; text-align: center; background: #e1e1e1; border: 1px solid #adadad; white-space: nowrap; color: #333; }
.b1 { width: 81px; }
.b2 { width: 97px; margin-left: 70px; }
.b3 { width: 74px; margin-left: 69px; border: 2px solid #0078d7; line-height: 17px; }
.b4 { width: 74px; margin-left: 10px; }

.arrows { position: absolute; left: 0; top: 0; pointer-events: none; }
```
